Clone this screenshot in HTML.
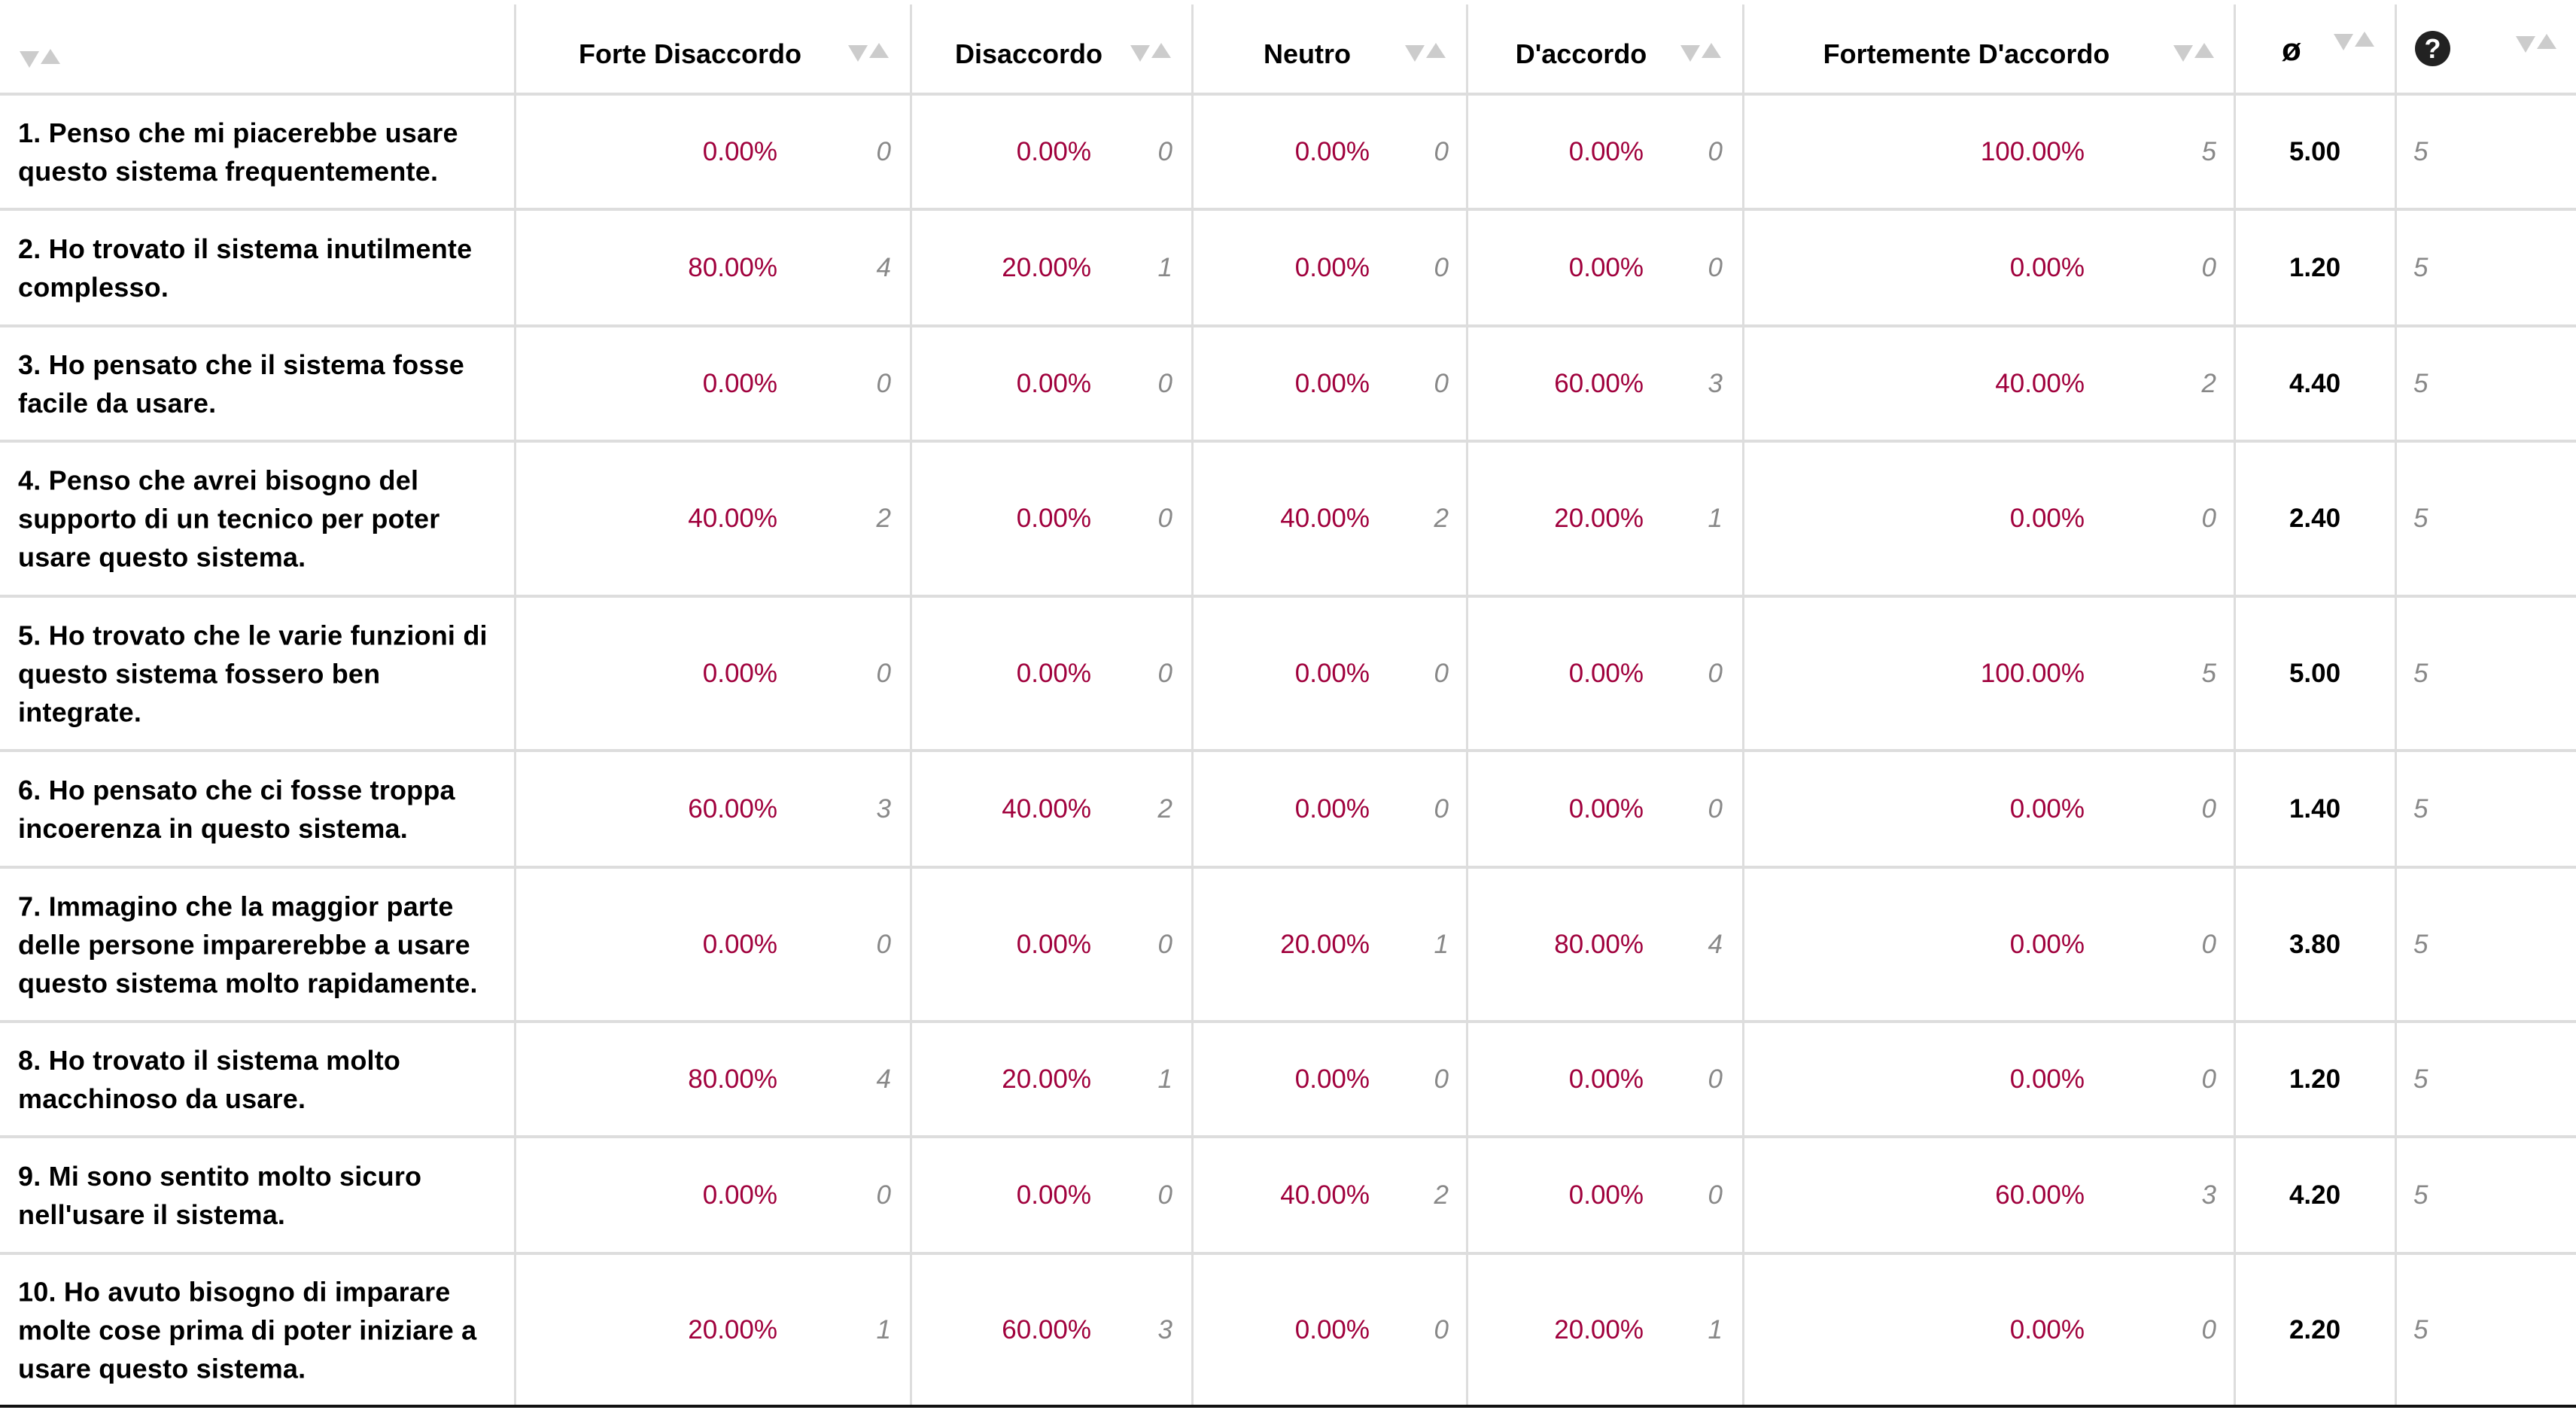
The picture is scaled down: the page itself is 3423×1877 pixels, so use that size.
<!DOCTYPE html>
<html><head><meta charset="utf-8"><style>
*{margin:0;padding:0;box-sizing:border-box}
body{width:3423px;height:1877px;background:#fff;position:relative;overflow:hidden;font-family:"Liberation Sans",sans-serif}
.v{position:absolute;top:6px;height:1862px;width:3px;background:#ddd}
.h{position:absolute;left:0;width:3423px;height:4px;background:#ddd}
.r{position:absolute;left:0;width:3423px}
.r>*{position:absolute;top:50%;transform:translateY(-50%);white-space:nowrap}
.q{left:24px;font-weight:bold;font-size:36px;line-height:51px;color:#000;letter-spacing:0.2px}
.p{font-size:35px;color:#a0003c;line-height:40px}
.k{font-size:35px;color:#888;font-style:italic;line-height:40px}
.m{left:2969px;width:214px;text-align:center;font-weight:bold;font-size:35px;line-height:40px}
.n{left:3207px;font-size:35px;color:#888;font-style:italic;line-height:40px}
.c1{right:2390px}.c2{right:1973px}.c3{right:1603px}.c4{right:1239px}.c5{right:653px}
.k1{right:2239px}.k2{right:1865px}.k3{right:1498px}.k4{right:1134px}.k5{right:478px}
.hd{position:absolute;font-weight:bold;font-size:36px;line-height:40px;transform:translate(-50%,-50%);white-space:nowrap}
.ar{position:absolute;width:56px;height:22px}
.ar:before{content:"";position:absolute;left:0;top:2px;border-left:13px solid transparent;border-right:13px solid transparent;border-top:22px solid #ccc}
.ar:after{content:"";position:absolute;left:28px;top:-1px;border-left:13px solid transparent;border-right:13px solid transparent;border-bottom:20px solid #ccc}
</style></head><body>
<div class="v" style="left:683px"></div>
<div class="v" style="left:1209px"></div>
<div class="v" style="left:1583px"></div>
<div class="v" style="left:1948px"></div>
<div class="v" style="left:2315px"></div>
<div class="v" style="left:2968px"></div>
<div class="v" style="left:3182px"></div>

<div class="ar" style="left:26px;top:66px"></div>
<div class="hd" style="left:917px;top:72px">Forte Disaccordo</div><div class="ar" style="left:1127px;top:58px"></div>
<div class="hd" style="left:1367px;top:72px">Disaccordo</div><div class="ar" style="left:1502px;top:58px"></div>
<div class="hd" style="left:1737px;top:72px">Neutro</div><div class="ar" style="left:1867px;top:58px"></div>
<div class="hd" style="left:2101px;top:72px">D'accordo</div><div class="ar" style="left:2233px;top:58px"></div>
<div class="hd" style="left:2613px;top:72px">Fortemente D'accordo</div><div class="ar" style="left:2888px;top:58px"></div>
<div class="hd" style="left:3045px;top:66px;font-size:42px">ø</div><div class="ar" style="left:3101px;top:43px"></div>
<div style="position:absolute;left:3209px;top:41px;width:47px;height:47px;border-radius:50%;background:#222;color:#fff;font-weight:bold;font-size:36px;line-height:47px;text-align:center">?</div><div class="ar" style="left:3343px;top:46px"></div>

<div class="h" style="top:123px"></div>
<div class="h" style="top:276px"></div>
<div class="h" style="top:431px"></div>
<div class="h" style="top:584px"></div>
<div class="h" style="top:790px"></div>
<div class="h" style="top:995px"></div>
<div class="h" style="top:1150px"></div>
<div class="h" style="top:1355px"></div>
<div class="h" style="top:1508px"></div>
<div class="h" style="top:1663px"></div>
<div style="position:absolute;left:0;top:1866px;width:3423px;height:4px;background:#111"></div>

<div class="r" style="top:127px;height:149px"><div class="q">1. Penso che mi piacerebbe usare<br>questo sistema frequentemente.</div>
<span class="p c1">0.00%</span><span class="k k1">0</span><span class="p c2">0.00%</span><span class="k k2">0</span><span class="p c3">0.00%</span><span class="k k3">0</span><span class="p c4">0.00%</span><span class="k k4">0</span><span class="p c5">100.00%</span><span class="k k5">5</span><span class="m">5.00</span><span class="n">5</span></div>

<div class="r" style="top:280px;height:151px"><div class="q">2. Ho trovato il sistema inutilmente<br>complesso.</div>
<span class="p c1">80.00%</span><span class="k k1">4</span><span class="p c2">20.00%</span><span class="k k2">1</span><span class="p c3">0.00%</span><span class="k k3">0</span><span class="p c4">0.00%</span><span class="k k4">0</span><span class="p c5">0.00%</span><span class="k k5">0</span><span class="m">1.20</span><span class="n">5</span></div>

<div class="r" style="top:435px;height:149px"><div class="q">3. Ho pensato che il sistema fosse<br>facile da usare.</div>
<span class="p c1">0.00%</span><span class="k k1">0</span><span class="p c2">0.00%</span><span class="k k2">0</span><span class="p c3">0.00%</span><span class="k k3">0</span><span class="p c4">60.00%</span><span class="k k4">3</span><span class="p c5">40.00%</span><span class="k k5">2</span><span class="m">4.40</span><span class="n">5</span></div>

<div class="r" style="top:588px;height:202px"><div class="q">4. Penso che avrei bisogno del<br>supporto di un tecnico per poter<br>usare questo sistema.</div>
<span class="p c1">40.00%</span><span class="k k1">2</span><span class="p c2">0.00%</span><span class="k k2">0</span><span class="p c3">40.00%</span><span class="k k3">2</span><span class="p c4">20.00%</span><span class="k k4">1</span><span class="p c5">0.00%</span><span class="k k5">0</span><span class="m">2.40</span><span class="n">5</span></div>

<div class="r" style="top:794px;height:201px"><div class="q">5. Ho trovato che le varie funzioni di<br>questo sistema fossero ben<br>integrate.</div>
<span class="p c1">0.00%</span><span class="k k1">0</span><span class="p c2">0.00%</span><span class="k k2">0</span><span class="p c3">0.00%</span><span class="k k3">0</span><span class="p c4">0.00%</span><span class="k k4">0</span><span class="p c5">100.00%</span><span class="k k5">5</span><span class="m">5.00</span><span class="n">5</span></div>

<div class="r" style="top:999px;height:151px"><div class="q">6. Ho pensato che ci fosse troppa<br>incoerenza in questo sistema.</div>
<span class="p c1">60.00%</span><span class="k k1">3</span><span class="p c2">40.00%</span><span class="k k2">2</span><span class="p c3">0.00%</span><span class="k k3">0</span><span class="p c4">0.00%</span><span class="k k4">0</span><span class="p c5">0.00%</span><span class="k k5">0</span><span class="m">1.40</span><span class="n">5</span></div>

<div class="r" style="top:1154px;height:201px"><div class="q">7. Immagino che la maggior parte<br>delle persone imparerebbe a usare<br>questo sistema molto rapidamente.</div>
<span class="p c1">0.00%</span><span class="k k1">0</span><span class="p c2">0.00%</span><span class="k k2">0</span><span class="p c3">20.00%</span><span class="k k3">1</span><span class="p c4">80.00%</span><span class="k k4">4</span><span class="p c5">0.00%</span><span class="k k5">0</span><span class="m">3.80</span><span class="n">5</span></div>

<div class="r" style="top:1359px;height:149px"><div class="q">8. Ho trovato il sistema molto<br>macchinoso da usare.</div>
<span class="p c1">80.00%</span><span class="k k1">4</span><span class="p c2">20.00%</span><span class="k k2">1</span><span class="p c3">0.00%</span><span class="k k3">0</span><span class="p c4">0.00%</span><span class="k k4">0</span><span class="p c5">0.00%</span><span class="k k5">0</span><span class="m">1.20</span><span class="n">5</span></div>

<div class="r" style="top:1512px;height:151px"><div class="q">9. Mi sono sentito molto sicuro<br>nell'usare il sistema.</div>
<span class="p c1">0.00%</span><span class="k k1">0</span><span class="p c2">0.00%</span><span class="k k2">0</span><span class="p c3">40.00%</span><span class="k k3">2</span><span class="p c4">0.00%</span><span class="k k4">0</span><span class="p c5">60.00%</span><span class="k k5">3</span><span class="m">4.20</span><span class="n">5</span></div>

<div class="r" style="top:1667px;height:199px"><div class="q">10. Ho avuto bisogno di imparare<br>molte cose prima di poter iniziare a<br>usare questo sistema.</div>
<span class="p c1">20.00%</span><span class="k k1">1</span><span class="p c2">60.00%</span><span class="k k2">3</span><span class="p c3">0.00%</span><span class="k k3">0</span><span class="p c4">20.00%</span><span class="k k4">1</span><span class="p c5">0.00%</span><span class="k k5">0</span><span class="m">2.20</span><span class="n">5</span></div>
</body></html>
